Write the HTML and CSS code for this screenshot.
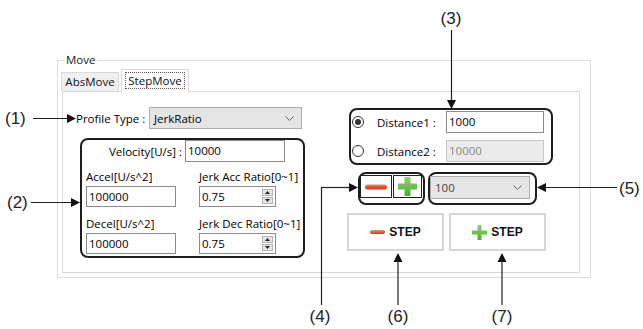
FILE: index.html
```html
<!DOCTYPE html>
<html>
<head>
<meta charset="utf-8">
<link rel="stylesheet" href="styles.css">
</head>
<body>
<div class="stage">
  <div class="group">
    <div class="legend">Move</div>
    <div class="tabs">
      <div class="tab">AbsMove</div>
      <div class="tab active"><span class="focus">StepMove</span></div>
    </div>
    <div class="panel">
      <div class="left">
        <div class="profile">
          <span class="profile-label">Profile Type :</span>
          <div class="combo"><span>JerkRatio</span><svg class="chev" width="9" height="5" viewBox="0 0 9 5"><path d="M0.5 0.5 L4.5 4.5 L8.5 0.5" fill="none" stroke="#666" stroke-width="1"/></svg></div>
        </div>
        <div class="box box2">
          <div class="vel-row">
            <span>Velocity[U/s] :</span>
            <div class="input vel">10000</div>
          </div>
          <div class="fields">
            <div class="flabel">Accel[U/s^2]</div>
            <div class="flabel">Jerk Acc Ratio[0~1]</div>
            <div class="input">100000</div>
            <div class="input spin"><span>0.75</span>
              <div class="spinbtns">
                <div class="sb"><svg width="5" height="3" viewBox="0 0 5 3"><path d="M0 3 L2.5 0 L5 3Z" fill="#222"/></svg></div>
                <div class="sb"><svg width="5" height="3" viewBox="0 0 5 3"><path d="M0 0 L2.5 3 L5 0Z" fill="#222"/></svg></div>
              </div>
            </div>
            <div class="flabel">Decel[U/s^2]</div>
            <div class="flabel">Jerk Dec Ratio[0~1]</div>
            <div class="input">100000</div>
            <div class="input spin"><span>0.75</span>
              <div class="spinbtns">
                <div class="sb"><svg width="5" height="3" viewBox="0 0 5 3"><path d="M0 3 L2.5 0 L5 3Z" fill="#222"/></svg></div>
                <div class="sb"><svg width="5" height="3" viewBox="0 0 5 3"><path d="M0 0 L2.5 3 L5 0Z" fill="#222"/></svg></div>
              </div>
            </div>
          </div>
        </div>
      </div>
      <div class="right">
        <div class="box box3">
          <div class="radio on"></div>
          <span class="dlabel">Distance1 :</span>
          <div class="input">1000</div>
          <div class="radio"></div>
          <span class="dlabel">Distance2 :</span>
          <div class="input disabled">10000</div>
        </div>
        <div class="row2">
          <div class="box box4">
            <div class="pm minus-btn">
              <svg width="22" height="6" viewBox="0 0 22 6"><defs><linearGradient id="rg" x1="0" y1="0" x2="0" y2="1"><stop offset="0" stop-color="#f38a6a"/><stop offset="0.5" stop-color="#e5502f"/><stop offset="1" stop-color="#c9361c"/></linearGradient></defs><rect x="0" y="0.5" width="22" height="5" rx="2.5" fill="url(#rg)"/></svg>
            </div>
            <div class="pm plus-btn">
              <svg width="21" height="21" viewBox="0 0 21 21"><defs><linearGradient id="gg" x1="0" y1="0" x2="0" y2="1"><stop offset="0" stop-color="#8fd46c"/><stop offset="1" stop-color="#4fa935"/></linearGradient></defs><path d="M7.5 1 H13.5 V7.5 H20 V13.5 H13.5 V20 H7.5 V13.5 H1 V7.5 H7.5Z" fill="url(#gg)"/></svg>
            </div>
          </div>
          <div class="box box5">
            <div class="combo small"><span class="grey">100</span><svg class="chev" width="9" height="5" viewBox="0 0 9 5"><path d="M0.5 0.5 L4.5 4.5 L8.5 0.5" fill="none" stroke="#666" stroke-width="1"/></svg></div>
          </div>
        </div>
        <div class="row3">
          <div class="stepbtn">
            <svg width="15" height="4" viewBox="0 0 15 4"><defs><linearGradient id="rg2" x1="0" y1="0" x2="0" y2="1"><stop offset="0" stop-color="#f38a6a"/><stop offset="1" stop-color="#cf3a1e"/></linearGradient></defs><rect x="0" y="0" width="15" height="4" rx="2" fill="url(#rg2)"/></svg>
            <b>STEP</b>
          </div>
          <div class="stepbtn">
            <svg width="15" height="15" viewBox="0 0 15 15"><defs><linearGradient id="gg2" x1="0" y1="0" x2="0" y2="1"><stop offset="0" stop-color="#8fd46c"/><stop offset="1" stop-color="#4fa935"/></linearGradient></defs><path d="M5.5 0 H9.5 V5.5 H15 V9.5 H9.5 V15 H5.5 V9.5 H0 V5.5 H5.5Z" fill="url(#gg2)"/></svg>
            <b>STEP</b>
          </div>
        </div>
      </div>
    </div>
  </div>

  <svg class="notes" width="643" height="329" viewBox="0 0 643 329">
    <g class="ann">
      <text x="5" y="124">(1)</text>
      <line x1="33" y1="118.5" x2="68" y2="118.5"/>
      <path d="M67 114 L76 118.5 L67 123Z"/>

      <text x="7" y="208">(2)</text>
      <line x1="31" y1="202.5" x2="71" y2="202.5"/>
      <path d="M71 198 L80 202.5 L71 207Z"/>

      <text x="451" y="24" text-anchor="middle">(3)</text>
      <line x1="451.5" y1="30" x2="451.5" y2="101"/>
      <path d="M447 100 L456 100 L451.5 109Z"/>

      <line x1="321.5" y1="187" x2="321.5" y2="305"/>
      <line x1="321" y1="187.5" x2="350" y2="187.5"/>
      <path d="M349 183 L358 187.5 L349 192Z"/>
      <text x="320" y="322" text-anchor="middle">(4)</text>

      <line x1="545" y1="187.5" x2="617" y2="187.5"/>
      <path d="M546 183 L537 187.5 L546 192Z"/>
      <text x="619" y="194">(5)</text>

      <path d="M393.5 262 L398 253 L402.5 262Z"/>
      <line x1="398" y1="261" x2="398" y2="305"/>
      <text x="398" y="322" text-anchor="middle">(6)</text>

      <path d="M497.5 262 L502 253 L506.5 262Z"/>
      <line x1="502" y1="261" x2="502" y2="305"/>
      <text x="502" y="322" text-anchor="middle">(7)</text>
    </g>
  </svg>
</div>
</body>
</html>
```
FILE: styles.css
```css
* { box-sizing: border-box; }
body {
  margin: 0;
  background: #fff;
  font-family: "Open Sans", "Noto Sans", sans-serif;
  font-size: 11.5px;
  color: #000;
}
.stage {
  position: relative;
  width: 643px;
  height: 329px;
  overflow: hidden;
  padding: 60px 0 0 57px;
}
.group {
  width: 534px;
  height: 218px;
  border: 1px solid #dcdcdc;
}
.legend {
  width: fit-content;
  margin: -8px 0 0 6px;
  padding: 0 2px;
  height: 14px;
  line-height: 14px;
  background: #fff;
  color: #1a1a1a;
}
.tabs {
  display: flex;
  align-items: flex-end;
  height: 22px;
  margin: 2px 0 0 3px;
}
.tab {
  height: 19px;
  width: 58px;
  border: 1px solid #d9d9d9;
  border-bottom: none;
  background: #f0f0f0;
  line-height: 17px;
  text-align: center;
  color: #111;
}
.tab.active {
  position: relative;
  z-index: 1;
  height: 23px;
  width: 68px;
  margin-left: 2px;
  margin-bottom: -1px;
  background: #fff;
  padding-top: 2px;
}
.focus {
  display: inline-block;
  border: 1px dotted #555;
  line-height: 15px;
  padding: 0 2px;
}
.panel {
  margin-left: 4px;
  width: 518px;
  height: 182px;
  border: 1px solid #d9d9d9;
  display: flex;
  padding: 15px 0 0 13px;
}
.left { width: 229px; flex: none; }
.profile {
  display: flex;
  align-items: center;
  height: 22px;
}
.profile-label { width: 73px; flex: none; white-space: nowrap; }
.combo {
  width: 153px;
  height: 22px;
  background: #e5e5e5;
  border: 1px solid #adadad;
  display: flex;
  align-items: center;
  justify-content: space-between;
  padding: 0 7px 0 4px;
}
.combo.small { width: 100px; height: 23px; }
.grey { color: #444; }
.box {
  border: 2px solid #1e1e1e;
  border-radius: 8px;
}
.box2 {
  margin: 9px 0 0 4px;
  width: 225px;
  height: 120px;
}
.vel-row {
  display: flex;
  justify-content: flex-end;
  align-items: center;
  gap: 3px;
  height: 22px;
  padding-right: 18px;
}
.input {
  height: 21px;
  border: 1px solid #8c8c8c;
  background: #fff;
  padding-left: 2px;
  line-height: 19px;
  white-space: nowrap;
}
.input.vel { width: 100px; height: 22px; line-height: 20px; }
.fields {
  display: grid;
  grid-template-columns: 90px 77px;
  grid-template-rows: 16px 21px 16px 21px;
  column-gap: 23px;
  row-gap: 1px;
  margin-top: 7px;
  padding-left: 4px;
}
.fields .flabel:nth-child(5), .fields .flabel:nth-child(6) { margin-top: 8px; }
.fields { grid-template-rows: 16px 21px 24px 21px; }
.fields .flabel { line-height: 16px; white-space: nowrap; align-self: end; }
.fields .flabel:nth-child(5), .fields .flabel:nth-child(6) { margin-top: 0; }
.spin {
  display: flex;
  align-items: center;
  justify-content: space-between;
  padding-right: 2px;
}
.spinbtns {
  display: flex;
  flex-direction: column;
  gap: 1px;
}
.sb {
  width: 11px;
  height: 7px;
  background: #e4e4e4;
  border: 1px solid #b4b4b4;
  display: flex;
  align-items: center;
  justify-content: center;
}
.sb svg { display: block; }
.right {
  margin-left: 42px;
  padding-top: 1px;
}
.box3 {
  margin-left: 2px;
  width: 204px;
  height: 57px;
  padding: 1px 0 0 1px;
  display: grid;
  grid-template-columns: 12px 82px 98px;
  grid-template-rows: 22px 22px;
  row-gap: 7px;
  align-items: center;
}
.box3 .input { height: 22px; line-height: 20px; }
.dlabel { padding-left: 13px; white-space: nowrap; }
.radio {
  width: 12px;
  height: 12px;
  border: 1px solid #333;
  border-radius: 50%;
  background: #fff;
  display: flex;
  align-items: center;
  justify-content: center;
}
.radio.on::after {
  content: "";
  width: 6px;
  height: 6px;
  border-radius: 50%;
  background: #333;
}
.input.disabled { background: #ebebeb; border-color: #c8c8c8; color: #8a8a8a; }
.row2 {
  display: flex;
  gap: 3px;
  margin: 7px 0 0 11px;
}
.box4 {
  width: 67px;
  height: 33px;
  display: flex;
  gap: 1px;
  padding-top: 1px;
}
.pm {
  height: 23px;
  border: 1px solid #222;
  background: #fff;
  display: flex;
  align-items: center;
  justify-content: center;
}
.minus-btn { width: 32px; }
.plus-btn { width: 29px; }
.pm svg { display: block; }
.box5 {
  width: 109px;
  height: 33px;
  padding: 2px 0 0 0;
}
.row3 {
  display: flex;
  gap: 5px;
  margin-top: 8px;
}
.stepbtn {
  width: 97px;
  height: 38px;
  border: 2px solid #d6d6d6;
  background: #fff;
  display: flex;
  align-items: center;
  justify-content: center;
  gap: 4px;
}
.stepbtn b {
  font-family: "Liberation Sans", Arial, sans-serif;
  font-weight: bold;
  font-size: 12px;
  color: #111;
}
.stepbtn svg { display: block; }
.notes {
  position: absolute;
  left: 0;
  top: 0;
  pointer-events: none;
}
.ann line { stroke: #222; stroke-width: 1.2; }
.ann path { fill: #111; }
.ann text {
  font-family: "Liberation Sans", Arial, sans-serif;
  font-size: 17px;
  fill: #222;
}
```
